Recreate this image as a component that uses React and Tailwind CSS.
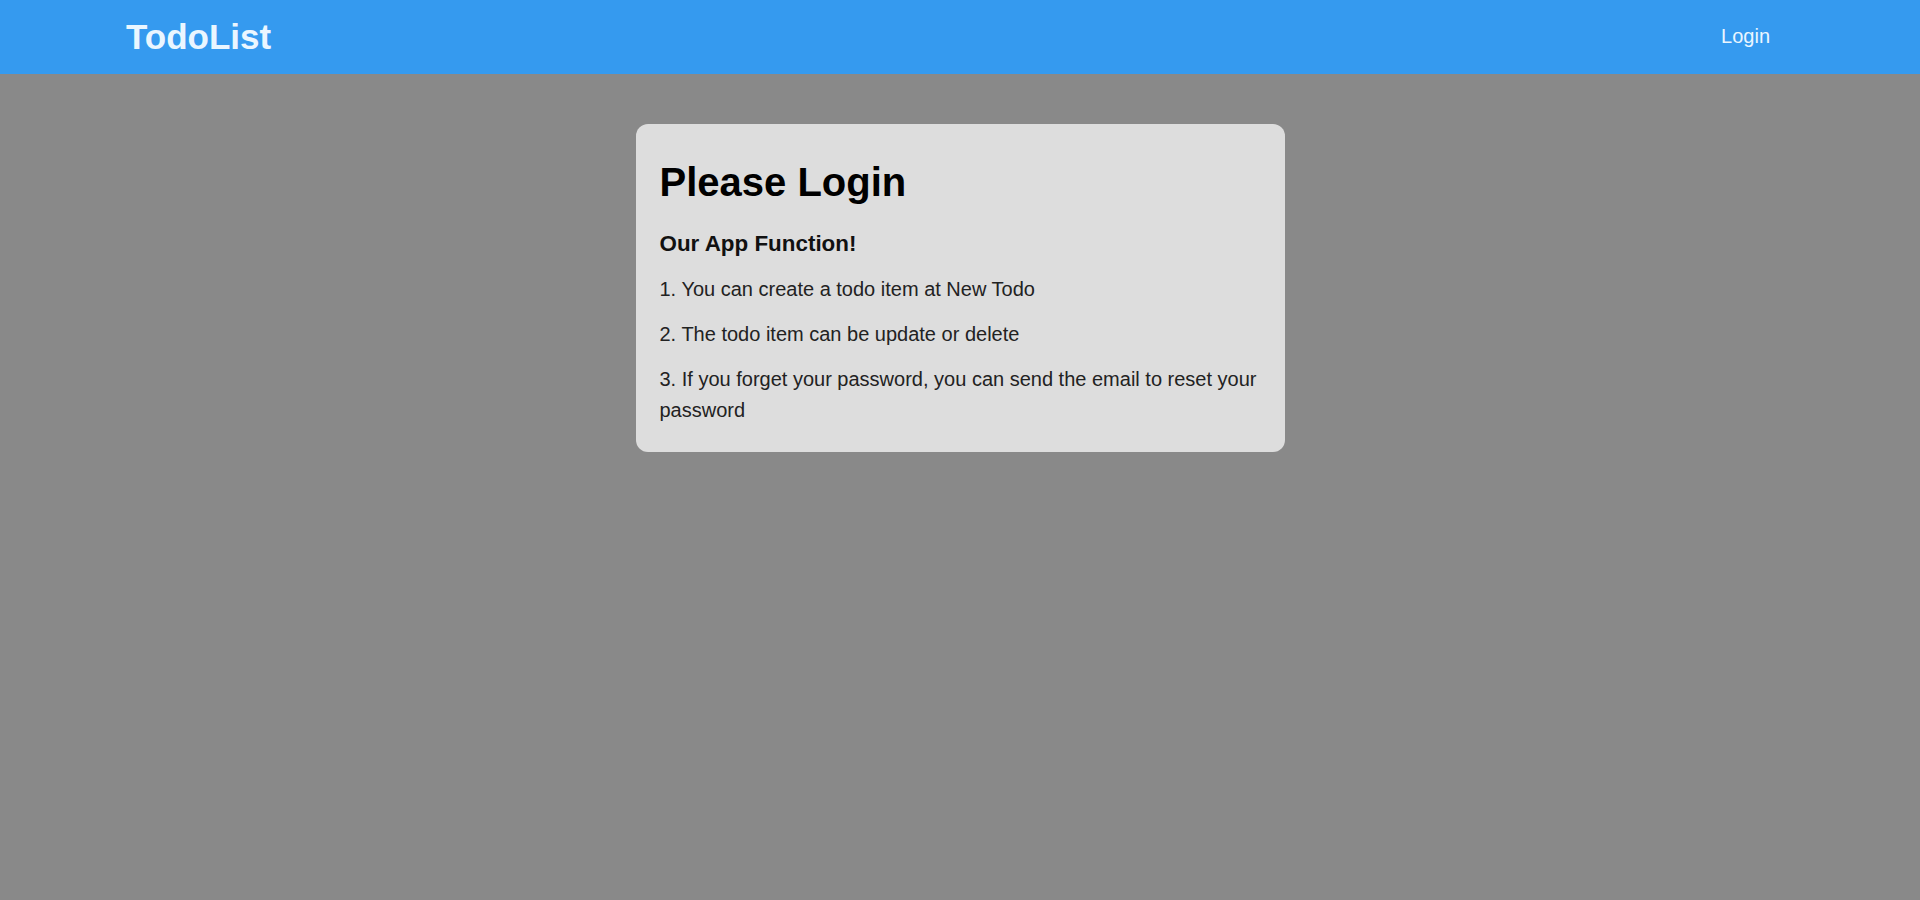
import React from 'react';

const steps = [
  '1. You can create a todo item at New Todo',
  '2. The todo item can be update or delete',
  '3. If you forget your password, you can send the email to reset your password',
];

const App = () => {
  return (
    <div className="min-h-screen bg-[#898989] font-['Liberation_Sans',Arial,sans-serif]">
      <header className="h-[74px] bg-[#359aef] flex items-center justify-between pl-[126px] pr-[150px]">
        <h1 className="text-[35px] font-bold text-[#eaf6ff] leading-none mt-[-2px]">TodoList</h1>
        <a href="#" className="text-[20px] text-[#eaf6ff] leading-none mt-[-2px]">
          Login
        </a>
      </header>
      <main className="flex justify-center pt-[50px]">
        <div className="w-[649px] bg-[#dddddd] rounded-xl pt-[35px] px-6 pb-[26px]">
          <h2 className="text-[40px] font-bold text-black leading-[46px]">Please Login</h2>
          <h3 className="mt-[24px] text-[22.4px] font-bold text-[#111] leading-[30px]">Our App Function!</h3>
          <div className="mt-[15px] flex flex-col gap-[14px]">
            {steps.map((s, i) => (
              <p key={i} className="text-[20px] text-[#222] leading-[31px]">
                {s}
              </p>
            ))}
          </div>
        </div>
      </main>
    </div>
  );
};

export default App;
